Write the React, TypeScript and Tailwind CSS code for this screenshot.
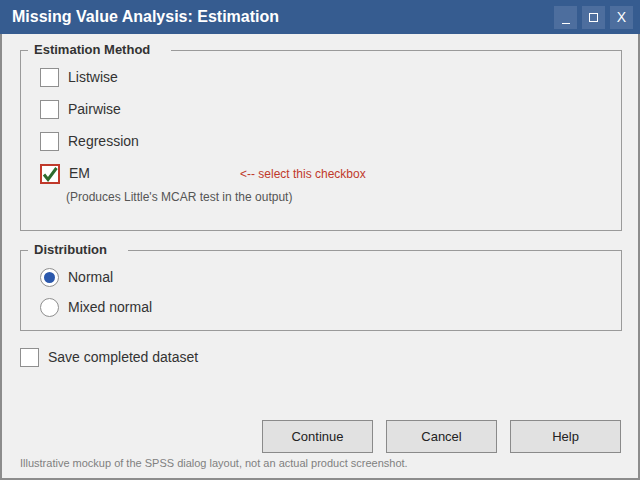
import { ReactNode } from 'react';

const font = { fontFamily: '"Liberation Sans", Arial, sans-serif' };

const Box = ({ checked = false, highlight = false }: { checked?: boolean; highlight?: boolean }) => (
  <span
    className={
      highlight
        ? 'flex h-[20px] w-[20px] shrink-0 items-center justify-center border-2 border-[#c0392b] bg-white'
        : 'flex h-[19px] w-[19px] shrink-0 items-center justify-center border border-[#8f8f8f] bg-white'
    }
  >
    {checked && (
      <svg width="16" height="16" viewBox="0 0 16 16">
        <path d="M2 8.5 L6 13.5 L14.5 2" fill="none" stroke="#2e6b2e" strokeWidth="3" strokeLinejoin="miter" />
      </svg>
    )}
  </span>
);

const Radio = ({ checked = false }: { checked?: boolean }) => (
  <span className="flex h-[19px] w-[19px] shrink-0 items-center justify-center rounded-full border border-[#8f8f8f] bg-white">
    {checked && <span className="h-[11px] w-[11px] rounded-full bg-[#2b58ac]" />}
  </span>
);

const Option = ({ control, label, extra }: { control: ReactNode; label: string; extra?: ReactNode }) => (
  <div className="flex h-[19px] items-center">
    {control}
    <span className="ml-[9px] text-[14px] text-[#333]">{label}</span>
    {extra}
  </div>
);

const Group = ({ title, className, children }: { title: string; className: string; children: ReactNode }) => (
  <fieldset className={`ml-[18px] w-[602px] border border-[#9a9a9a] ${className}`}>
    <legend className="ml-[7px] pl-[6px] pr-[21px] text-[13px] font-bold leading-[16px] text-[#333]">{title}</legend>
    <div className="pl-[19px] pt-[10px]">{children}</div>
  </fieldset>
);

const DialogButton = ({ label }: { label: string }) => (
  <button className="h-[33px] w-[111px] border border-[#8a8a8a] bg-[#e1e1e1] text-[13px] text-[#222]">
    {label}
  </button>
);

export default function App() {
  return (
    <div className="flex h-[480px] w-[640px] flex-col bg-[#f0f0f0]" style={font}>
      <div className="flex h-[34px] shrink-0 items-center bg-[#365c90] pl-[12px] pr-[7px]">
        <h1 className="flex-1 text-[16px] font-bold text-white">Missing Value Analysis: Estimation</h1>
        <div className="flex gap-[5px]">
          <span className="flex h-[23px] w-[23px] items-end justify-center bg-[#4d6e9e] pb-[5px]">
            <span className="h-[1px] w-[8px] bg-white" />
          </span>
          <span className="flex h-[23px] w-[23px] items-center justify-center bg-[#4d6e9e]">
            <span className="h-[9px] w-[9px] border border-white" />
          </span>
          <span className="flex h-[23px] w-[23px] items-center justify-center bg-[#4d6e9e] text-[14px] text-white">
            X
          </span>
        </div>
      </div>

      <div className="flex flex-1 flex-col border-x-2 border-b-2 border-[#8c8c8c] pt-[8px]">
        <Group title="Estimation Method" className="h-[189px]">
          <div className="flex flex-col gap-[13px]">
            <Option control={<Box />} label="Listwise" />
            <Option control={<Box />} label="Pairwise" />
            <Option control={<Box />} label="Regression" />
            <Option
              control={<Box checked highlight />}
              label="EM"
              extra={<span className="ml-[150px] text-[12px] text-[#c0392b]">&lt;-- select this checkbox</span>}
            />
          </div>
          <p className="ml-[26px] mt-[5px] text-[12px] text-[#555]">(Produces Little's MCAR test in the output)</p>
        </Group>

        <Group title="Distribution" className="mt-[11px] h-[89px]">
          <div className="flex flex-col gap-[11px]">
            <Option control={<Radio checked />} label="Normal" />
            <Option control={<Radio />} label="Mixed normal" />
          </div>
        </Group>

        <div className="ml-[18px] mt-[17px]">
          <Option control={<Box />} label="Save completed dataset" />
        </div>

        <div className="mr-[17px] mt-[53px] flex justify-end gap-[13px]">
          <DialogButton label="Continue" />
          <DialogButton label="Cancel" />
          <DialogButton label="Help" />
        </div>

        <p className="ml-[18px] mt-[2px] text-[11px] text-[#808080]">
          Illustrative mockup of the SPSS dialog layout, not an actual product screenshot.
        </p>
      </div>
    </div>
  );
}
